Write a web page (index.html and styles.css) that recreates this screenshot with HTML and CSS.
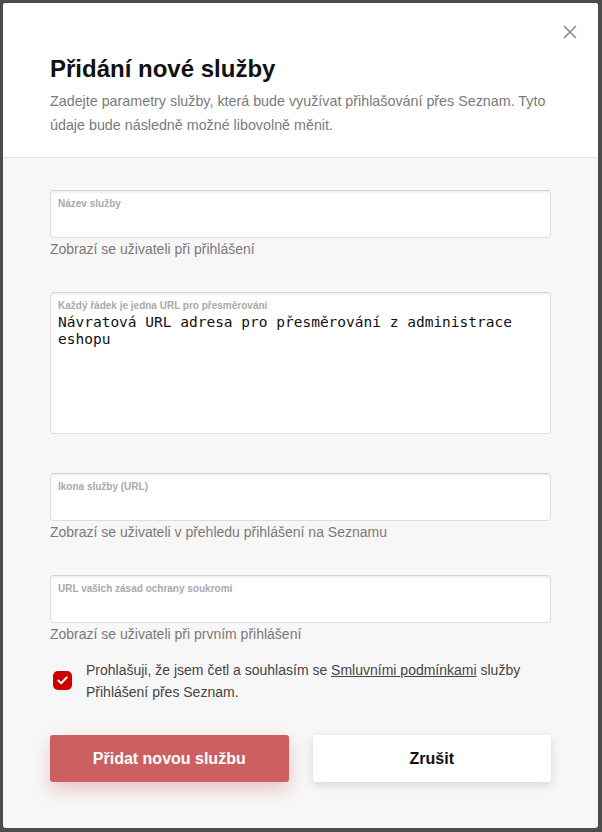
FILE: index.html
```html
<!DOCTYPE html>
<html lang="cs">
<head>
    <meta charset="UTF-8">
    <meta name="viewport" content="width=device-width, initial-scale=1.0">
    <title>Přidání nové služby</title>
    <link rel="stylesheet" href="styles.css">
</head>
<body>
    <div class="overlay">
        <div class="modal">
            <div class="modal-header">
                <button class="close-btn" aria-label="Zavřít">
                    <svg width="14" height="14" viewBox="0 0 14 14"><path d="M1 1 L13 13 M13 1 L1 13" stroke="#8a8a8a" stroke-width="1.6" fill="none"/></svg>
                </button>
                <h2>Přidání nové služby</h2>
                <p class="intro">Zadejte parametry služby, která bude využívat přihlašování přes Seznam. Tyto údaje bude následně možné libovolně měnit.</p>
            </div>

            <div class="modal-body">
                <div class="field">
                    <label class="box">
                        <span class="box-label">Název služby</span>
                        <input type="text">
                    </label>
                    <div class="hint">Zobrazí se uživateli při přihlášení</div>
                </div>

                <div class="field field-area">
                    <label class="box box-area">
                        <span class="box-label">Každý řádek je jedna URL pro přesměrování</span>
                        <textarea>Návratová URL adresa pro přesměrování z administrace eshopu</textarea>
                    </label>
                </div>

                <div class="field">
                    <label class="box">
                        <span class="box-label">Ikona služby (URL)</span>
                        <input type="text">
                    </label>
                    <div class="hint">Zobrazí se uživateli v přehledu přihlášení na Seznamu</div>
                </div>

                <div class="field">
                    <label class="box">
                        <span class="box-label">URL vašich zásad ochrany soukromí</span>
                        <input type="text">
                    </label>
                    <div class="hint">Zobrazí se uživateli při prvním přihlášení</div>
                </div>

                <div class="agree">
                    <span class="check">
                        <svg width="11" height="9" viewBox="0 0 11 9"><path d="M1.3 4.6 L4.2 7.3 L9.7 1.5" stroke="#fff" stroke-width="2" fill="none" stroke-linecap="round" stroke-linejoin="round"/></svg>
                    </span>
                    <p><span>Prohlašuji, že jsem četl a souhlasím se</span> <a href="#">Smluvními podmínkami</a> <span>služby</span> <span>Přihlášení přes Seznam.</span></p>
                </div>

                <div class="actions">
                    <button class="btn btn-primary">Přidat novou službu</button>
                    <button class="btn btn-secondary">Zrušit</button>
                </div>
            </div>
        </div>
    </div>
</body>
</html>
```

FILE: styles.css
```css
body {
    margin: 0;
    font-family: 'Liberation Sans', Arial, sans-serif;
    background: #4c4c4c;
}

.overlay {
    padding: 3px 4px 3px 3px;
    min-height: 832px;
    box-sizing: border-box;
}

.modal {
    background: #f7f7f7;
    border-radius: 3px;
    overflow: hidden;
}

.modal-header {
    position: relative;
    background: #fff;
    padding: 51px 47px 20px;
    border-bottom: 1px solid #e4e4e4;
}

.close-btn {
    position: absolute;
    top: 22px;
    right: 21px;
    border: none;
    background: none;
    padding: 0;
    cursor: pointer;
}

.modal-header h2 {
    margin: 0 0 5px;
    font-size: 24px;
    line-height: 30px;
    color: #111;
    font-weight: bold;
}

.intro {
    margin: 0;
    font-size: 14.3px;
    line-height: 24px;
    color: #7a7a7a;
}

.modal-body {
    padding: 32px 47px 46px;
}

.field {
    margin-bottom: 33px;
}

.field-area {
    margin-bottom: 39px;
}

.box {
    display: block;
    background: #fff;
    border: 1px solid #dedede;
    border-top-color: #d2d2d2;
    border-radius: 4px;
    box-shadow: inset 0 2px 2px rgba(0, 0, 0, 0.06);
    height: 48px;
    box-sizing: border-box;
    padding: 6px 7px 0;
}

.box-area {
    height: 142px;
}

.box-label {
    display: block;
    font-size: 10px;
    line-height: 14px;
    font-weight: bold;
    color: #a9a9a9;
}

.box input,
.box textarea {
    display: block;
    width: 100%;
    border: none;
    outline: none;
    padding: 0;
    background: transparent;
    box-sizing: border-box;
}

.box textarea {
    font-family: 'DejaVu Sans Mono', monospace;
    font-size: 14.5px;
    line-height: 17px;
    color: #111;
    height: 112px;
    margin-top: 1px;
    resize: none;
}

.hint {
    margin-top: 1px;
    font-size: 14px;
    line-height: 20px;
    color: #7a7a7a;
}

.agree {
    display: flex;
    align-items: flex-start;
    gap: 14px;
    margin-top: -18px;
    padding-left: 3px;
}

.check {
    flex: none;
    width: 19px;
    height: 19px;
    margin-top: 12px;
    border-radius: 5px;
    background: #cc0000;
    display: flex;
    align-items: center;
    justify-content: center;
}

.agree p {
    margin: 0;
    font-size: 14px;
    line-height: 22px;
    color: #444;
}

.agree a {
    color: #444;
    text-decoration: underline;
}

.actions {
    display: flex;
    gap: 24px;
    margin-top: 32px;
}

.btn {
    flex: 1;
    height: 47px;
    border: none;
    border-radius: 3px;
    font-family: 'Liberation Sans', Arial, sans-serif;
    font-size: 16px;
    font-weight: bold;
    cursor: pointer;
}

.btn-primary {
    background: #cc5f5f;
    color: #fff;
    box-shadow: 0 8px 18px rgba(204, 70, 70, 0.28);
}

.btn-secondary {
    background: #fff;
    color: #111;
    box-shadow: 0 3px 10px rgba(0, 0, 0, 0.14);
}
```
